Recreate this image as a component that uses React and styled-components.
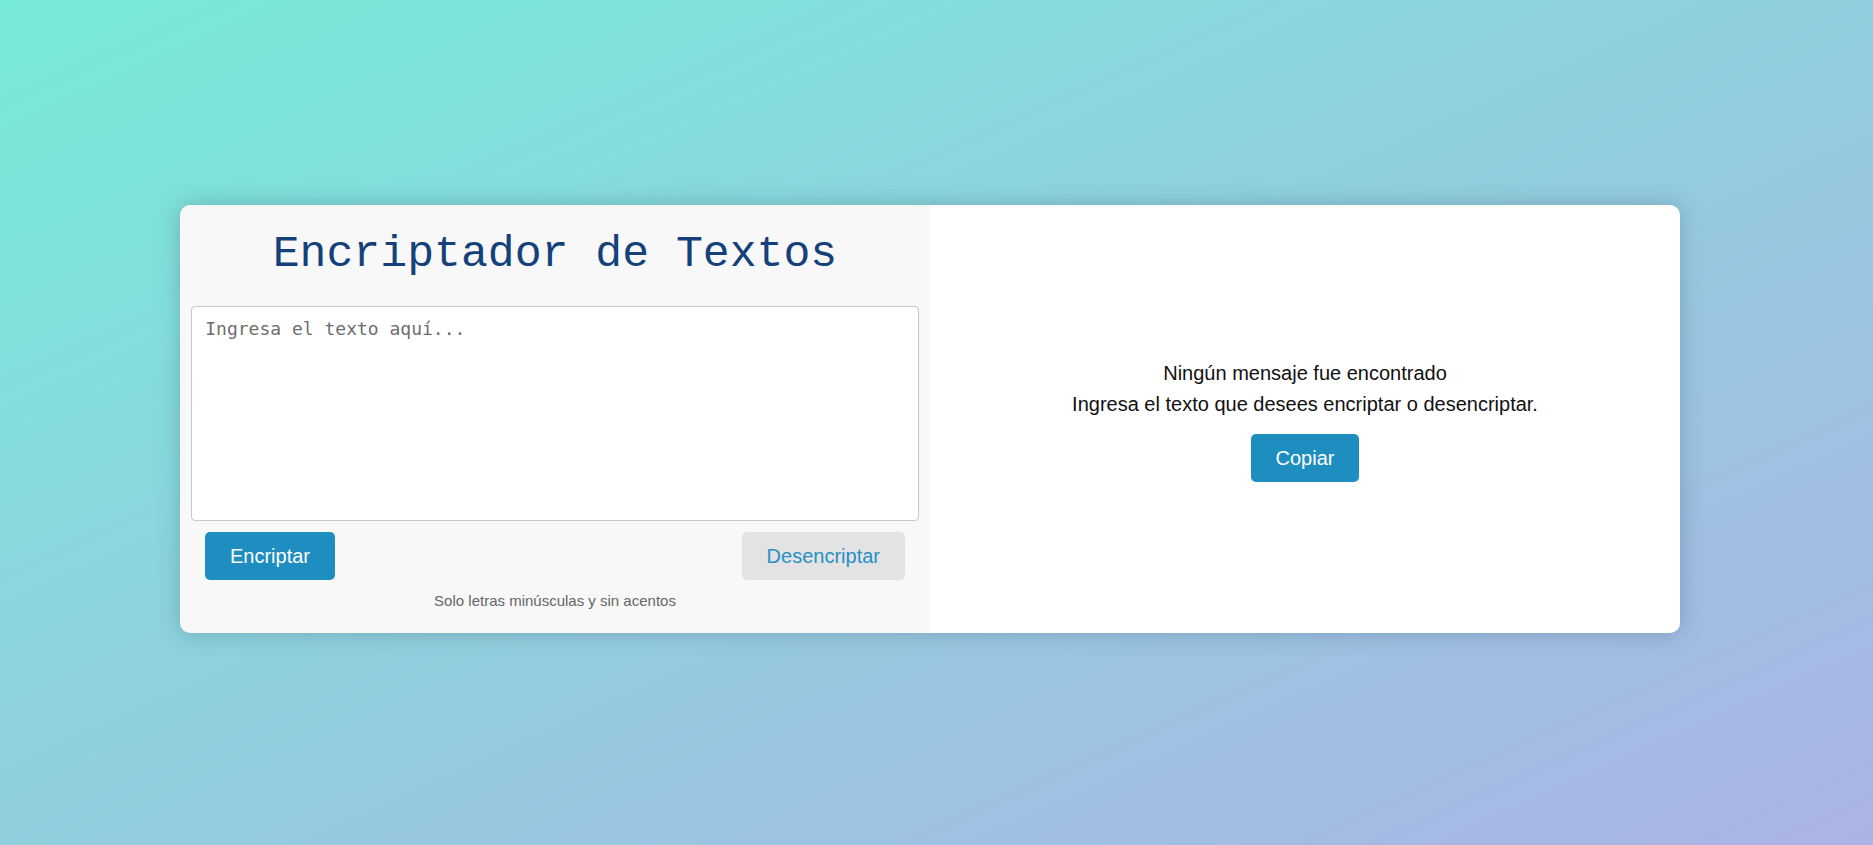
import React from "react";
import styled, { createGlobalStyle } from "styled-components";

const Global = createGlobalStyle`
  html, body { margin: 0; padding: 0; }
  body {
    font-family: "Liberation Sans", Arial, sans-serif;
  }
`;

const Page = styled.div`
  min-height: 845px;
  box-sizing: border-box;
  display: flex;
  align-items: center;
  justify-content: center;
  padding: 0 13px 7px 0;
  background: linear-gradient(to bottom right, #76ebd7 0%, #92cedf 50%, #abb3e5 100%);
`;

const Card = styled.main`
  width: 1500px;
  display: grid;
  grid-template-columns: 1fr 1fr;
  border-radius: 10px;
  overflow: hidden;
  box-shadow: 0 0 22px rgba(40, 70, 90, 0.28);
`;

const LeftPanel = styled.section`
  background: #f8f8f8;
  display: flex;
  flex-direction: column;
  align-items: center;
  padding: 24px 0 24px;
`;

const Title = styled.h1`
  margin: 0 0 26px;
  font-family: "Liberation Mono", "Courier New", monospace;
  font-weight: 400;
  font-size: 44.8px;
  line-height: 51px;
  color: #15417a;
  text-align: center;
`;

const TextArea = styled.textarea`
  width: 97%;
  height: 215px;
  box-sizing: border-box;
  resize: none;
  border: 1px solid #c8c8c8;
  border-radius: 4px;
  background: #fff;
  padding: 11px 13px;
  font-family: "DejaVu Sans Mono", monospace;
  font-size: 18px;
  line-height: 22px;
  color: #333;
  outline: none;
  &::placeholder {
    color: #6e6e6e;
  }
`;

const ButtonRow = styled.div`
  align-self: stretch;
  display: flex;
  justify-content: space-between;
  padding: 0 25px;
  margin-top: 11px;
`;

const Button = styled.button`
  height: 48px;
  padding: 0 25px;
  border: none;
  border-radius: 5px;
  font-family: "Liberation Sans", Arial, sans-serif;
  font-size: 20px;
  cursor: pointer;
  background: ${(p) => (p.$variant === "secondary" ? "#e3e3e3" : "#1e8dc0")};
  color: ${(p) => (p.$variant === "secondary" ? "#2690c6" : "#ffffff")};
`;

const Note = styled.p`
  margin: 12px 0 0;
  font-size: 15px;
  line-height: 17px;
  color: #666;
`;

const RightPanel = styled.section`
  background: #fff;
  display: flex;
  flex-direction: column;
  align-items: center;
  justify-content: center;
  padding-top: 2px;
`;

const Message = styled.p`
  margin: 0 0 14px;
  font-size: 20px;
  line-height: 31px;
  color: #111;
  text-align: center;
`;

export default function App() {
  return (
    <>
      <Global />
      <Page>
        <Card>
          <LeftPanel>
            <Title>Encriptador de Textos</Title>
            <TextArea placeholder="Ingresa el texto aquí..." />
            <ButtonRow>
              <Button>Encriptar</Button>
              <Button $variant="secondary">Desencriptar</Button>
            </ButtonRow>
            <Note>Solo letras minúsculas y sin acentos</Note>
          </LeftPanel>
          <RightPanel>
            <Message>
              Ningún mensaje fue encontrado
              <br />
              Ingresa el texto que desees encriptar o desencriptar.
            </Message>
            <Button>Copiar</Button>
          </RightPanel>
        </Card>
      </Page>
    </>
  );
}
